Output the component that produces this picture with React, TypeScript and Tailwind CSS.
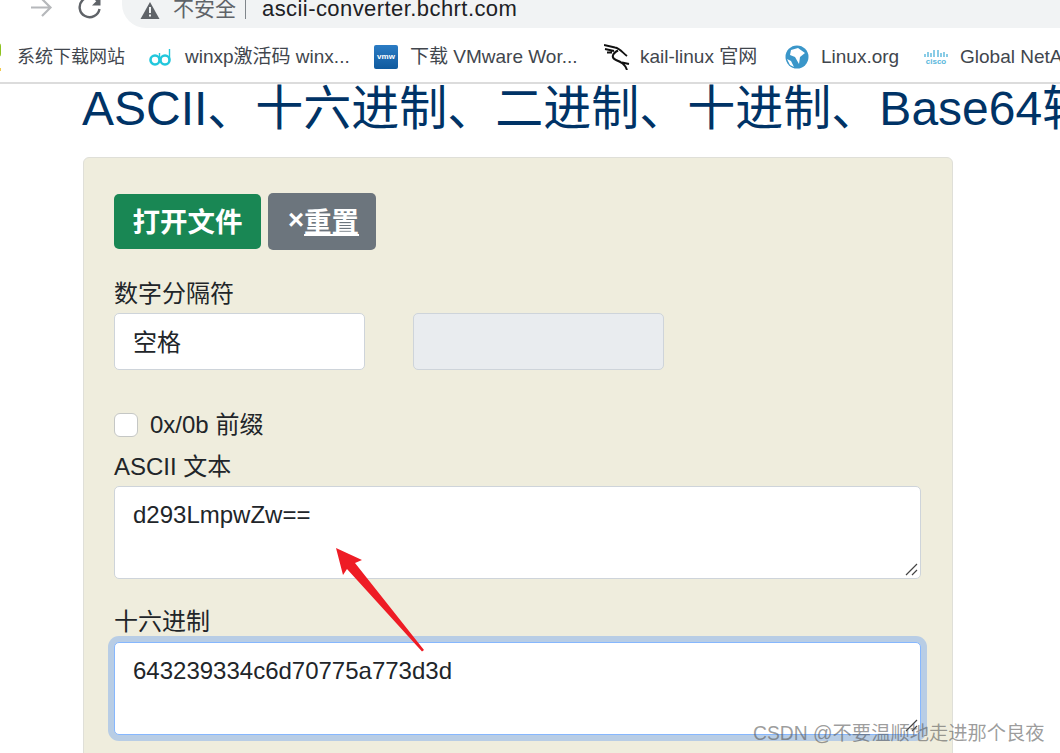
import React from "react";

const sans = "font-['Liberation_Sans','Noto_Sans_CJK_SC',sans-serif]";

function Bookmark({ icon, label, className }: { icon: React.ReactNode; label: string; className: string }) {
  return (
    <div className={`flex items-center shrink-0 whitespace-nowrap ${className}`}>
      {icon}
      <span className="leading-[24px] text-[#41464d]">{label}</span>
    </div>
  );
}

function ResizeGrip() {
  return (
    <svg className="absolute right-[2px] bottom-[2px]" width="14" height="14" viewBox="0 0 14 14">
      <path d="M2 13 L13 2 M8 13 L13 8" stroke="#444" strokeWidth="1.2" fill="none" />
    </svg>
  );
}

export default function App() {
  return (
    <div className={`relative w-[1060px] h-[753px] overflow-hidden bg-white ${sans}`}>
      {/* browser chrome */}
      <div className="h-[84px] border-b-2 border-[#dcdcdc] overflow-hidden">
        <div className="flex h-[28px]">
          <div className="relative w-[122px] shrink-0">
            <svg className="absolute left-0 top-0" width="122" height="28" viewBox="0 0 122 28">
              <path d="M31 7.5 H50 M42 -1 L50.5 7.5 L42 16" stroke="#b6b8bb" strokeWidth="2.2" fill="none" />
              <path d="M98.5 2.5 A10 10 0 1 0 99.5 9" stroke="#5f6368" strokeWidth="2.4" fill="none" />
              <path d="M92 5.5 H100.5 V-3 Z" fill="#5f6368" />
            </svg>
          </div>
          <div className="flex-1 flex items-center bg-[#f1f3f4] rounded-bl-[24px] pl-[18px] pb-[11px] overflow-hidden">
            <svg width="20" height="18" viewBox="0 0 20 18" className="mt-[5px] shrink-0">
              <path d="M10 0 L19.5 17 H0.5 Z" fill="#5f6368" />
              <rect x="9" y="5" width="2" height="6" fill="#f1f3f4" />
              <rect x="9" y="12.5" width="2" height="2" fill="#f1f3f4" />
            </svg>
            <span className="ml-[13px] text-[21px] leading-[24px] text-[#5f6368]">不安全</span>
            <span className="ml-[9px] w-[1px] h-[20px] bg-[#80868b]" />
            <span className="ml-[16px] text-[22px] leading-[24px] tracking-[0.43px] text-[#202124]">ascii-converter.bchrt.com</span>
          </div>
        </div>
        <div className="flex items-center h-[54px] pt-[4px] -ml-[4px] text-[19px]">
          <Bookmark
            className="w-[153px] text-[18px]"
            label="系统下载网站"
            icon={
              <span className="w-[21px] shrink-0 flex flex-col -ml-[16px] mr-[16px] items-end">
                <span className="w-[6px] h-[14px] rounded-full bg-[#8dc21f]" />
                <span className="w-[3px] h-[3px] mt-[11px] bg-[#f2c94c]" />
              </span>
            }
          />
          <Bookmark
            className="w-[225px]"
            label="winxp激活码 winx..."
            icon={
              <svg width="22" height="20" viewBox="0 0 22 20" className="mr-[14px] shrink-0">
                <circle cx="6" cy="13" r="4.5" stroke="#22c7dc" strokeWidth="2.6" fill="none" />
                <circle cx="16" cy="13" r="4.5" stroke="#22c7dc" strokeWidth="2.6" fill="none" />
                <path d="M20.5 2 V13 M10.5 6 V13" stroke="#22c7dc" strokeWidth="1.4" fill="none" />
              </svg>
            }
          />
          <Bookmark
            className="w-[230px]"
            label="下载 VMware Wor..."
            icon={
              <span className="w-[24px] h-[24px] rounded-[2px] mr-[12px] shrink-0 flex items-center justify-center bg-gradient-to-b from-[#2b7cc4] to-[#0f5a9e] text-white text-[8px] font-bold">
                vmw
              </span>
            }
          />
          <Bookmark
            className="w-[181px]"
            label="kail-linux 官网"
            icon={
              <svg width="26" height="26" viewBox="0 0 26 26" className="mr-[10px] shrink-0">
                <path d="M0 1 L11 3.5 C16 4.5 18 8 23 12 M1 5 L10 7 M3 8.5 L8 8.5" stroke="#111" strokeWidth="1.8" fill="none" />
                <path d="M14 6.5 C8 9.5 7 14 12 16 C17 18 21 20 23 26 M18 18.5 L25 20" stroke="#111" strokeWidth="2" fill="none" />
              </svg>
            }
          />
          <Bookmark
            className="w-[139px]"
            label="Linux.org"
            icon={
              <svg width="24" height="24" viewBox="0 0 24 24" className="mr-[12px] shrink-0">
                <circle cx="12" cy="12" r="11.5" fill="#3a96c9" />
                <path d="M6 5 L13 3 L20 8 L15 12 L14 19 L10 12 L5 10 Z M2 14 L6 16 L9 22 L5 20 Z" fill="#fff" />
              </svg>
            }
          />
          <Bookmark
            className="w-[140px]"
            label="Global NetAcad"
            icon={
              <span className="w-[24px] mr-[12px] shrink-0 flex flex-col items-center">
                <svg width="24" height="9" viewBox="0 0 24 9">
                  <path d="M1 5 V8 M4 3 V8 M7 4 V8 M10 1 V8 M14 1 V8 M17 4 V8 M20 3 V8 M23 5 V8" stroke="#59b7dc" strokeWidth="1.4" />
                </svg>
                <span className="text-[8px] leading-[8px] font-bold text-[#59b7dc]">cisco</span>
              </span>
            }
          />
        </div>
      </div>

      {/* page */}
      <div className="pl-[83px] w-[953px]">
        <h1 className="-ml-[1px] mt-[-3px] text-[48px] leading-[56px] text-[#003366] whitespace-nowrap">
          ASCII、十六进制、二进制、十进制、Base64转换器
        </h1>
        <div className="mt-[20px] h-[700px] bg-[#efeddd] border border-[#dfdfd8] rounded-[6px] pl-[30px] pr-[31px] pt-[35px] text-[24px] text-[#212529]">
          <div className="flex items-start gap-[7px]">
            <button className="mt-[1px] h-[55px] w-[147px] pt-[2px] rounded-[5px] bg-[#198754] text-white font-bold text-[27.5px]">打开文件</button>
            <button className="h-[57px] w-[108px] pt-[2px] pl-[3px] rounded-[5px] bg-[#6c757d] text-white font-bold text-[27.5px]">
              <span className="inline-block -translate-y-[3px]">×</span>
              <u className="underline">重置</u>
            </button>
          </div>
          <div className="mt-[26px] leading-[36px]">数字分隔符</div>
          <div className="flex gap-[48px] mt-[1px]">
            <div className="w-[251px] h-[57px] bg-white border border-[#ced4da] rounded-[5px] px-[18px] leading-[57px]">空格</div>
            <div className="w-[251px] h-[57px] bg-[#e9ecef] border border-[#ced4da] rounded-[5px]" />
          </div>
          <div className="flex items-center mt-[37px] h-[36px]">
            <span className="w-[24px] h-[24px] bg-white border border-[#c5c7c5] rounded-[6px]" />
            <span className="ml-[12px]">0x/0b 前缀</span>
          </div>
          <div className="mt-[6px] leading-[36px]">ASCII 文本</div>
          <div className="relative mt-[1px] h-[93px] bg-white border border-[#ced4da] rounded-[5px] px-[18px] pt-[10px] leading-[36px]">
            d293LmpwZw==
            <ResizeGrip />
          </div>
          <div className="mt-[25px] leading-[36px]">十六进制</div>
          <div className="relative mt-[2px] h-[93px] bg-white border border-[#86b7fe] rounded-[5px] shadow-[0_0_0_6px_#b8cde5] px-[18px] pt-[10px] leading-[36px]">
            643239334c6d70775a773d3d
            <ResizeGrip />
          </div>
        </div>
      </div>

      {/* red annotation arrow */}
      <svg className="absolute left-0 top-0 pointer-events-none" width="1060" height="753" viewBox="0 0 1060 753">
        <path d="M336 548 L362 560 L355 563 L424 650 L422 651.5 L347 569 L343 575 Z" fill="#ee1c25" />
      </svg>

      {/* watermark */}
      <div className="absolute left-[753px] top-[722px] text-[19.3px] leading-[24px] text-[#5a5a5a]/60 whitespace-nowrap">
        CSDN @不要温顺地走进那个良夜
      </div>
    </div>
  );
}
